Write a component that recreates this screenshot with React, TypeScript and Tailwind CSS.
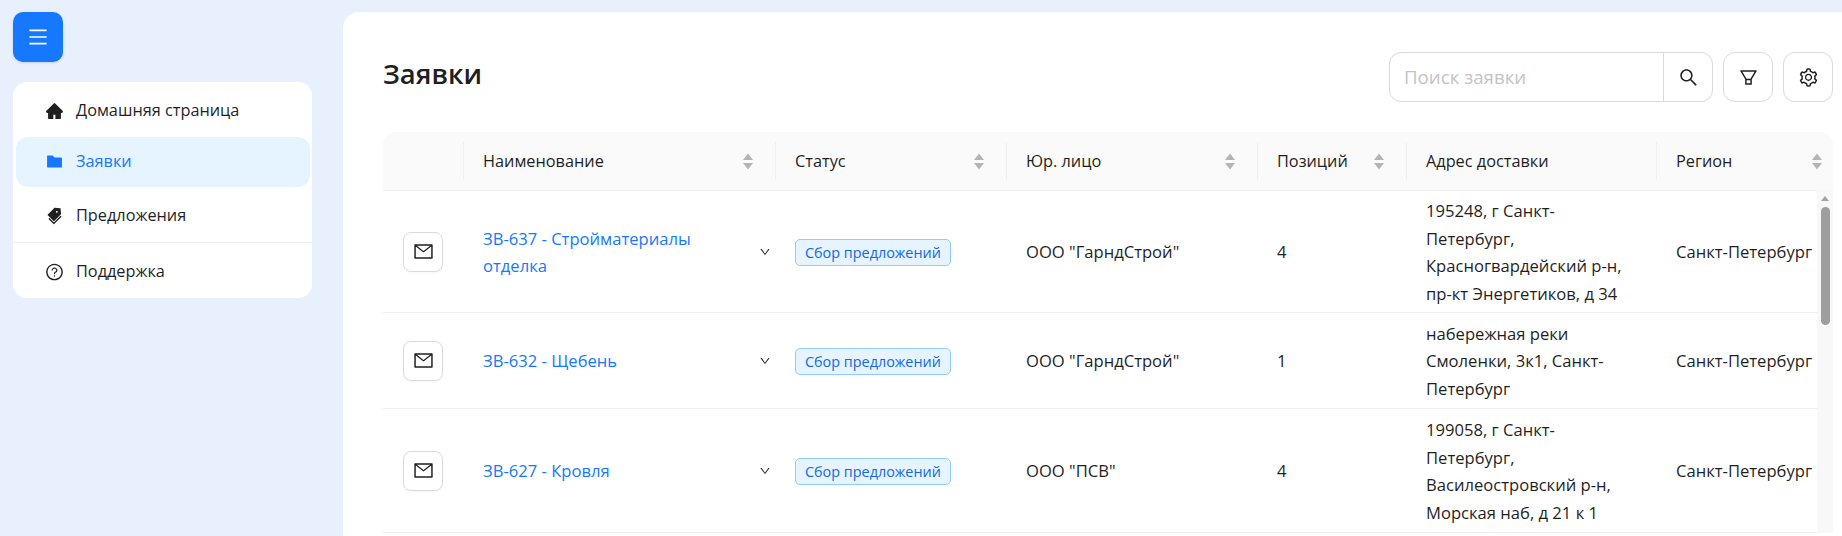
import {
  AiFillHome,
  AiFillFolder,
  AiFillTags,
  AiOutlineQuestionCircle,
  AiOutlineMenu,
  AiOutlineSearch,
  AiOutlineFilter,
  AiOutlineSetting,
  AiOutlineMail,
  AiOutlineDown,
} from "react-icons/ai";

type Row = {
  name: string;
  customer: string;
  count: number;
  address: string;
  height: string;
};

const rows: Row[] = [
  {
    name: "ЗВ-637 - Стройматериалы отделка",
    customer: 'ООО "ГарндСтрой"',
    count: 4,
    address: "195248, г Санкт-Петербург, Красногвардейский р-н, пр-кт Энергетиков, д 34",
    height: "h-[122px]",
  },
  {
    name: "ЗВ-632 - Щебень",
    customer: 'ООО "ГарндСтрой"',
    count: 1,
    address: "набережная реки Смоленки, 3к1, Санкт-Петербург",
    height: "h-[96px]",
  },
  {
    name: "ЗВ-627 - Кровля",
    customer: 'ООО "ПСВ"',
    count: 4,
    address: "199058, г Санкт-Петербург, Василеостровский р-н, Морская наб, д 21 к 1",
    height: "h-[124px]",
  },
];

const columns = ["Наименование", "Статус", "Юр. лицо", "Позиций", "Адрес доставки", "Регион"];

const SortIcon = () => (
  <svg width="10" height="17" viewBox="0 0 10 17" className="shrink-0 fill-[#b4b4b4]">
    <path d="M5 0.5 L10 7 L0 7 Z" />
    <path d="M5 16.5 L10 10 L0 10 Z" />
  </svg>
);

const NavItem = ({
  icon,
  label,
  active,
  className,
}: {
  icon: React.ReactNode;
  label: string;
  active?: boolean;
  className: string;
}) => (
  <div
    className={`ml-[3px] mr-[2px] flex h-[50px] items-center gap-[12px] rounded-[12px] pb-[1px] pl-[29px] ${className} ${
      active ? "bg-[#e6f4ff] text-[#1677ff]" : "text-[#1f1f1f]"
    }`}
  >
    <span className="flex w-[19px] justify-center">{icon}</span>
    <span>{label}</span>
  </div>
);

export default function App() {
  return (
    <div className="flex h-[536px] overflow-hidden bg-[#e8f0fe] font-['Open_Sans','Noto_Sans',sans-serif] text-[16.3px] text-[#1f1f1f]">
      <aside className="ml-[13px] mt-[12px] w-[299px] shrink-0">
        <button className="flex h-[50px] w-[50px] items-center justify-center rounded-[10px] bg-[#1677ff] text-white shadow-sm">
          <AiOutlineMenu size={22} />
        </button>
        <nav className="mt-[20px] rounded-[14px] bg-white pb-[1px] pt-[4px]">
          <NavItem className="" icon={<AiFillHome size={20} />} label="Домашняя страница" />
          <NavItem className="mt-[1px]" active icon={<AiFillFolder size={19} />} label="Заявки" />
          <NavItem className="mt-[4px]" icon={<AiFillTags size={20} />} label="Предложения" />
          <div className="mt-[1px] h-px bg-[#f0f0f0]" />
          <NavItem className="mt-[4px]" icon={<AiOutlineQuestionCircle size={20} />} label="Поддержка" />
        </nav>
      </aside>

      <main className="ml-[31px] mt-[12px] min-w-0 flex-1 rounded-tl-[16px] bg-white pl-[40px] pr-[9px]">
        <div className="flex h-[120px] items-start justify-between pt-[40px]">
          <h1 className="pt-[2px] text-[27.4px] font-semibold leading-[40px]">Заявки</h1>
          <div className="flex gap-[10px]">
            <div className="flex h-[50px] w-[324px] items-center rounded-[12px] border border-[#d9d9d9]">
              <span className="flex-1 pl-[14px] text-[18.7px] text-[#c4c4c4]">Поиск заявки</span>
              <span className="flex h-full w-[49px] items-center justify-center border-l border-[#d9d9d9]">
                <AiOutlineSearch size={21} />
              </span>
            </div>
            <button className="flex h-[50px] w-[50px] items-center justify-center rounded-[12px] border border-[#d9d9d9]">
              <AiOutlineFilter size={21} />
            </button>
            <button className="flex h-[50px] w-[50px] items-center justify-center rounded-[12px] border border-[#d9d9d9]">
              <AiOutlineSetting size={21} />
            </button>
          </div>
        </div>

        <div className="relative overflow-hidden rounded-t-[12px]">
          <table className="w-[1461px] max-w-none table-fixed border-collapse">
            <colgroup>
              <col className="w-[80px]" />
              <col className="w-[312px]" />
              <col className="w-[231px]" />
              <col className="w-[251px]" />
              <col className="w-[149px]" />
              <col className="w-[250px]" />
              <col className="w-[188px]" />
            </colgroup>
            <thead>
              <tr className="h-[58px] border-b border-[#f0f0f0] bg-[#fafafa]">
                <th />
                {columns.map((title) => (
                  <th key={title} className="p-0 text-left font-normal">
                    <div className="flex h-[38px] items-center justify-between border-l border-[#f0f0f0] pl-[19px] pr-[22px] pt-[1px]">
                      <span>{title}</span>
                      {title !== "Адрес доставки" && <SortIcon />}
                    </div>
                  </th>
                ))}
              </tr>
            </thead>
            <tbody className="text-[16.6px]">
              {rows.map((r) => (
                <tr key={r.name} className={`${r.height} border-b border-[#f0f0f0]`}>
                  <td className="pl-[20px] pt-[1px]">
                    <span className="flex h-[40px] w-[40px] items-center justify-center rounded-[8px] border border-[#d9d9d9] shadow-[0_2px_0_rgba(0,0,0,0.02)]">
                      <AiOutlineMail size={21} />
                    </span>
                  </td>
                  <td className="pl-[20px] pt-[2px]">
                    <div className="flex items-center justify-between pr-[4px]">
                      <a className="w-[235px] leading-[27.5px] text-[#1677ff]">{r.name}</a>
                      <AiOutlineDown size={12} />
                    </div>
                  </td>
                  <td className="pl-[20px] pt-[2px]">
                    <span className="inline-block rounded-[5px] border border-[#91caff] bg-[#e6f4ff] px-[9px] text-[14.4px] leading-[25px] text-[#1268e3]">
                      Сбор предложений
                    </span>
                  </td>
                  <td className="pl-[20px] pt-[2px]">{r.customer}</td>
                  <td className="pl-[20px] pt-[2px]">{r.count}</td>
                  <td className="pl-[20px] pr-[26px] pt-[2px] leading-[27.5px]">{r.address}</td>
                  <td className="whitespace-nowrap pl-[20px] pt-[2px]">Санкт-Петербург</td>
                </tr>
              ))}
            </tbody>
          </table>
          <div className="absolute bottom-0 right-0 top-[58px] flex w-[16px] flex-col items-center bg-[#f8f8f8] pt-[6px]">
            <div className="h-0 w-0 border-x-[4px] border-b-[5px] border-x-transparent border-b-[#a3a3a3]" />
            <div className="mt-[6px] h-[118px] w-[9px] rounded-[5px] bg-[#9e9e9e]" />
          </div>
        </div>
      </main>
    </div>
  );
}
